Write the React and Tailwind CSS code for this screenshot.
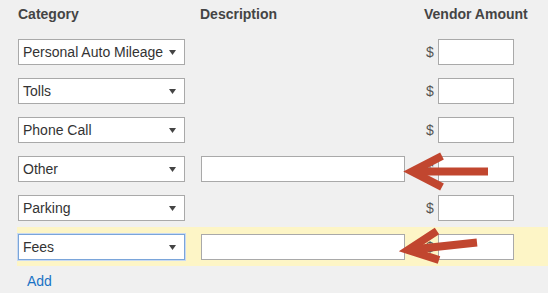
const rows = [
  { category: "Personal Auto Mileage", description: false },
  { category: "Tolls", description: false },
  { category: "Phone Call", description: false },
  { category: "Other", description: true },
  { category: "Parking", description: false },
  { category: "Fees", description: true, active: true },
];

function Select({ value, focused }) {
  return (
    <div
      className={`flex h-[26px] w-[167px] items-center justify-between bg-white pl-[4px] pr-[8px] text-[14px] text-[#333] border ${
        focused ? "border-[#7aa5da] shadow-[0_0_0_1px_#c9daf1]" : "border-[#a9a9a9]"
      }`}
    >
      <span>{value}</span>
      <svg width="7" height="5" viewBox="0 0 7 5">
        <polygon points="0,0 7,0 3.5,5" fill="#444" />
      </svg>
    </div>
  );
}

function Field({ width }) {
  return <div className={`h-[26px] ${width} border border-[#a9a9a9] bg-white`} />;
}

export default function App() {
  return (
    <div className="relative h-[293px] w-[548px] overflow-hidden bg-[#f0f0f0] font-['Liberation_Sans',Arial,sans-serif]">
      <div className="pl-[17px]">
        <div className="grid h-[32px] grid-cols-[184px_223px_1fr] pt-[6px] text-[14px] font-bold leading-[16px] text-[#444]">
          <div className="pl-px">Category</div>
          <div className="-ml-px">Description</div>
          <div>Vendor Amount</div>
        </div>

        {rows.map((row) => (
          <div
            key={row.category}
            className={`grid h-[39px] grid-cols-[184px_223px_1fr] items-start pt-[7px] ${row.active ? "bg-[#fdf5c6]" : ""}`}
          >
            <div className="pl-px">
              <Select value={row.category} focused={row.active} />
            </div>
            <div>{row.description && <Field width="w-[204px]" />}</div>
            <div className="flex items-start gap-[6px] pl-[2px]">
              <span className="w-[6px] text-[14px] leading-[26px] text-[#555]">$</span>
              <Field width="w-[76px]" />
            </div>
          </div>
        ))}

        <div className="pl-[10px] pt-[7px] text-[14px] leading-[16px] text-[#1a73c5]">Add</div>
      </div>

      <svg className="pointer-events-none absolute inset-0" width="548" height="293" viewBox="0 0 548 293">
        <g stroke="#c1462f" strokeWidth="8" fill="none" strokeLinejoin="miter" strokeMiterlimit="10">
          <polyline points="442,156 412,171.5 442,187" />
          <line x1="416" y1="171.5" x2="488" y2="171.5" />
          <polyline points="437,231 408,250 439,260" />
          <line x1="412" y1="249.5" x2="477" y2="242.5" />
        </g>
      </svg>
    </div>
  );
}
